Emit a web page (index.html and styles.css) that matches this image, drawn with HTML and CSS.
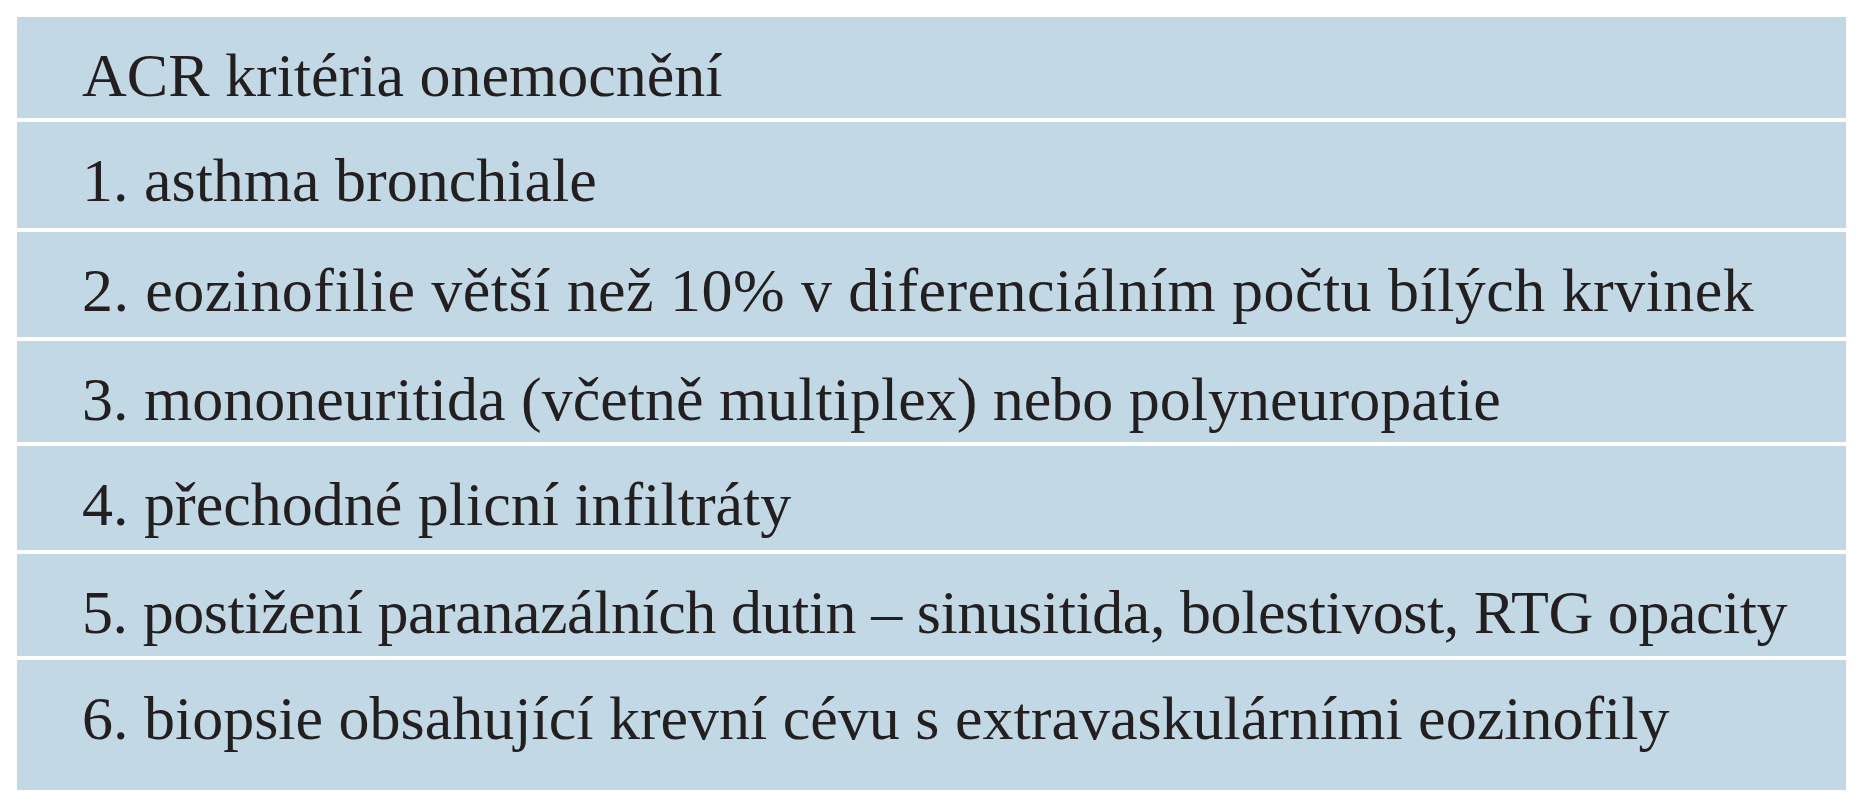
FILE: index.html
```html
<!DOCTYPE html>
<html lang="cs">
<head>
<meta charset="utf-8">
<title>ACR kritéria onemocnění</title>
<link rel="stylesheet" href="styles.css">
</head>
<body>
<div class="criteria">
  <div class="row">ACR kritéria onemocnění</div>
  <div class="row">1. asthma bronchiale</div>
  <div class="row row--loose">2. eozinofilie větší než 10% v diferenciálním počtu bílých krvinek</div>
  <div class="row">3. mononeuritida (včetně multiplex) nebo polyneuropatie</div>
  <div class="row">4. přechodné plicní infiltráty</div>
  <div class="row row--tight">5. postižení paranazálních dutin – sinusitida, bolestivost, RTG opacity</div>
  <div class="row">6. biopsie obsahující krevní cévu s extravaskulárními eozinofily</div>
</div>
</body>
</html>
```
FILE: styles.css
```css
html, body {
  margin: 0;
  padding: 0;
  background: #ffffff;
}
body {
  padding: 17px 10px 0 17px;
}
.criteria {
  width: 1829px;
  display: grid;
  grid-template-columns: 1829px;
  grid-template-rows: 101px 106px 105px 101px 104px 102px 130px;
  row-gap: 4px;
}
.row {
  background: #c2d8e4;
  color: #231f20;
  font-family: "Liberation Serif", "Times New Roman", serif;
  font-size: 62px;
  line-height: 1;
  padding: 27px 0 0 65px;
  white-space: nowrap;
  min-width: 0;
}
.row--loose {
  letter-spacing: 0.45px;
}
.row--tight {
  letter-spacing: -0.45px;
}
```
